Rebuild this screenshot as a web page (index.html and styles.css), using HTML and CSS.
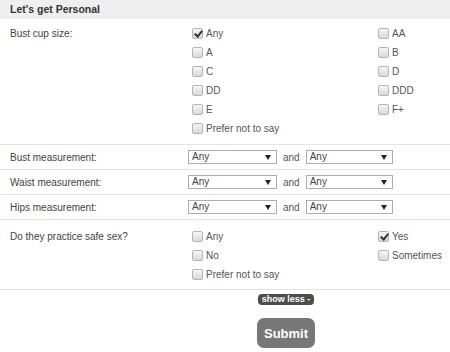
FILE: index.html
```html
<!DOCTYPE html>
<html lang="en">
<head>
  <meta charset="UTF-8" />
  <title>Let's get Personal</title>
  <link rel="stylesheet" href="styles.css">
</head>
<body>
  <div class="section">
    <div class="section-title">Let's get Personal</div>

    <div class="field field-checks">
      <div class="field-label">Bust cup size:</div>
      <div class="options">
        <label class="opt"><input type="checkbox" checked> Any</label>
        <label class="opt"><input type="checkbox"> AA</label>
        <label class="opt"><input type="checkbox"> A</label>
        <label class="opt"><input type="checkbox"> B</label>
        <label class="opt"><input type="checkbox"> C</label>
        <label class="opt"><input type="checkbox"> D</label>
        <label class="opt"><input type="checkbox"> DD</label>
        <label class="opt"><input type="checkbox"> DDD</label>
        <label class="opt"><input type="checkbox"> E</label>
        <label class="opt"><input type="checkbox"> F+</label>
        <label class="opt"><input type="checkbox"> Prefer not to say</label>
      </div>
    </div>

    <div class="field field-range">
      <div class="field-label">Bust measurement:</div>
      <div class="range">
        <span class="select-wrap"><select><option>Any</option></select></span>
        <span class="and">and</span>
        <span class="select-wrap select-to"><select><option>Any</option></select></span>
      </div>
    </div>

    <div class="field field-range">
      <div class="field-label">Waist measurement:</div>
      <div class="range">
        <span class="select-wrap"><select><option>Any</option></select></span>
        <span class="and">and</span>
        <span class="select-wrap select-to"><select><option>Any</option></select></span>
      </div>
    </div>

    <div class="field field-range">
      <div class="field-label">Hips measurement:</div>
      <div class="range">
        <span class="select-wrap"><select><option>Any</option></select></span>
        <span class="and">and</span>
        <span class="select-wrap select-to"><select><option>Any</option></select></span>
      </div>
    </div>

    <div class="field field-checks field-safe">
      <div class="field-label">Do they practice safe sex?</div>
      <div class="options">
        <label class="opt"><input type="checkbox"> Any</label>
        <label class="opt"><input type="checkbox" checked> Yes</label>
        <label class="opt"><input type="checkbox"> No</label>
        <label class="opt"><input type="checkbox"> Sometimes</label>
        <label class="opt"><input type="checkbox"> Prefer not to say</label>
      </div>
    </div>
  </div>

  <div class="actions">
    <button class="toggle">show less -</button>
    <button class="submit">Submit</button>
  </div>
</body>
</html>
```

FILE: styles.css
```css
body {
  font-family: "Liberation Sans", Arial, sans-serif;
  margin: 0;
  background: #fff;
  color: #444;
  font-size: 10px;
}

.section-title {
  background: #efefef;
  color: #333;
  font-weight: bold;
  font-size: 10.5px;
  height: 19px;
  line-height: 18px;
  padding-left: 10px;
}

.field {
  display: flex;
  border-bottom: 1px solid #e4e4e4;
  padding-left: 10px;
}

.field-label {
  width: 178px;
  flex: none;
  line-height: 19px;
  color: #444;
}

.field-checks {
  padding-top: 5px;
  padding-bottom: 6px;
}

.field-safe {
  padding-top: 7px;
  padding-bottom: 5px;
}

.options {
  flex: 1;
  display: grid;
  grid-template-columns: 186px 1fr;
  grid-auto-rows: 19px;
  padding-left: 4px;
}

.opt {
  display: flex;
  align-items: center;
  gap: 3px;
  color: #555;
  white-space: nowrap;
}

.opt input {
  appearance: none;
  -webkit-appearance: none;
  margin: 0;
  width: 11px;
  height: 11px;
  border: 1px solid #b5b5b5;
  border-radius: 2px;
  background: linear-gradient(#f6f6f6, #d9d9d9);
  position: relative;
  flex: none;
}

.opt input:checked::after {
  content: "";
  position: absolute;
  left: 3px;
  top: 0;
  width: 3px;
  height: 6px;
  border: solid #333;
  border-width: 0 2px 2px 0;
  transform: rotate(40deg);
}

.field-range {
  align-items: center;
  height: 24px;
}

.range {
  display: flex;
  align-items: center;
}

.select-wrap {
  position: relative;
  display: inline-block;
}

.select-wrap::after {
  content: "";
  position: absolute;
  right: 6px;
  top: 5px;
  border-left: 3px solid transparent;
  border-right: 3px solid transparent;
  border-top: 5px solid #222;
  pointer-events: none;
}

select {
  appearance: none;
  -webkit-appearance: none;
  width: 89px;
  height: 14px;
  border: 1px solid #adadad;
  border-radius: 0;
  background: #fff;
  font-family: inherit;
  font-size: 10px;
  color: #444;
  padding: 0 0 0 3px;
  margin: 0;
  line-height: 12px;
}

.select-to select {
  width: 87px;
}

.and {
  margin: 0 6px;
  color: #555;
}

.actions {
  display: flex;
  flex-direction: column;
  align-items: center;
  padding-top: 4px;
  padding-left: 122px;
}

button {
  font-family: inherit;
  border: none;
  color: #fff;
  font-weight: bold;
  cursor: pointer;
}

.toggle {
  background: #4d4d4d;
  font-size: 9px;
  padding: 0 4px;
  height: 11px;
  line-height: 11px;
  border-radius: 4px;
}

.submit {
  margin-top: 13px;
  background: #777;
  font-size: 13px;
  width: 58px;
  height: 30px;
  border-radius: 7px;
}
```
